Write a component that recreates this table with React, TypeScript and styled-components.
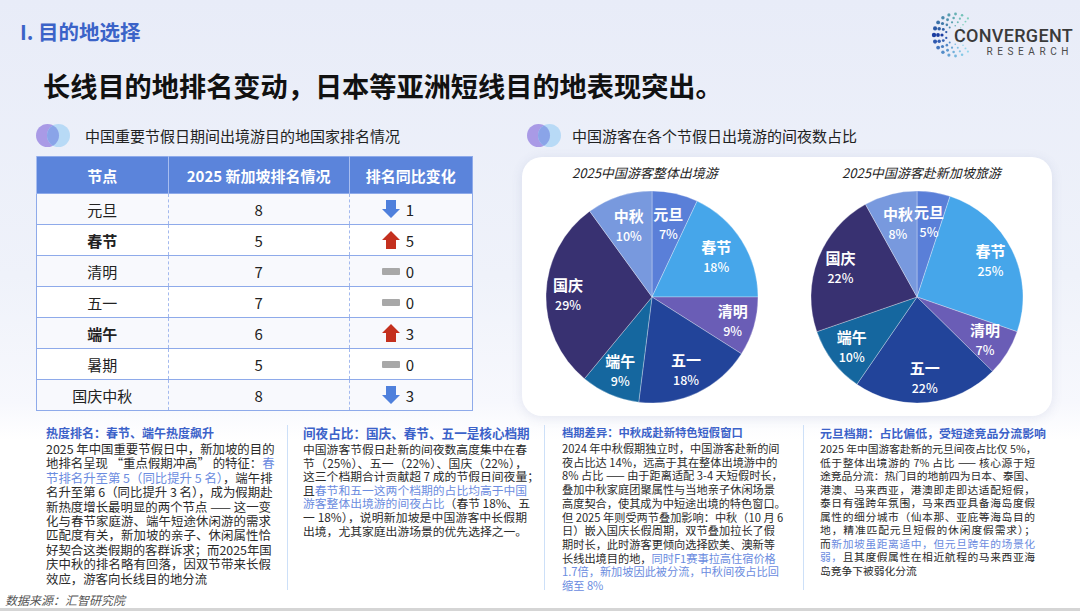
import React from 'react';
import styled, { createGlobalStyle } from 'styled-components';

const GlobalStyle = createGlobalStyle`
    html, body {
        margin: 0;
        padding: 0;
    }
    body {
        font-family: "Noto Sans CJK SC", "Noto Sans", sans-serif;
        background: #fff;
    }
`;

const Page = styled.div`
    width: 1080px;
    height: 611px;
    overflow: hidden;
    display: flex;
    flex-direction: column;
    background: linear-gradient(180deg, #e8ecf8 0%, #eff2fa 45%, #f7f8fd 66%, #fff 72%, #fff 100%);
`;

const TopBar = styled.div`
    display: flex;
    justify-content: space-between;
    align-items: flex-start;
    height: 58px;
    padding: 12px 7px 0 20px;
    box-sizing: border-box;
`;

const SectionLabel = styled.div`
    margin-top: 8px;
    font-size: 20.5px;
    line-height: 22px;
    font-weight: 700;
    color: #3b63c8;
`;

const Logo = styled.div`
    display: flex;
    align-items: flex-start;
`;

const LogoText = styled.div`
    display: flex;
    flex-direction: column;
    align-items: flex-end;
    margin: 14px 0 0 -23px;
    font-family: Roboto, "Liberation Sans", sans-serif;
    color: #3a3a3a;
`;

const LogoName = styled.span`
    font-size: 18px;
    line-height: 20px;
    font-weight: 500;
    letter-spacing: 0.3px;
`;

const LogoSub = styled.span`
    font-size: 10px;
    line-height: 11px;
    letter-spacing: 4.6px;
    color: #4a4a4a;
`;

const Title = styled.h1`
    margin: 10px 0 0 43px;
    font-size: 27.2px;
    line-height: 34px;
    font-weight: 700;
    color: #111;
`;

const Main = styled.div`
    display: grid;
    grid-template-columns: 437px 530px;
    column-gap: 49px;
    margin-top: 21px;
    padding-left: 36px;
`;

const Column = styled.div`
    display: flex;
    flex-direction: column;
`;

const SubHeader = styled.div<{ $indent: number; $gap: number; $below: number }>`
    display: flex;
    align-items: center;
    height: 24px;
    padding-left: ${p => p.$indent}px;
    gap: ${p => p.$gap}px;
    margin-bottom: ${p => p.$below}px;
    font-size: 15px;
    color: #222;
`;

const Table = styled.table`
    width: 437px;
    border-collapse: collapse;
    font-size: 15px;
    color: #222;
    border: 1px solid #8eaaea;

    tbody tr:nth-child(odd) {
        background: #f8f9fd;
    }
    tbody tr:nth-child(even) {
        background: #fff;
    }
`;

const HeadCell = styled.th<{ $w: number }>`
    width: ${p => p.$w}px;
    height: 36px;
    padding: 0;
    background: #5b84db;
    color: #fff;
    font-weight: 700;
    font-size: 15px;
    border-left: 1px solid #a7bdf0;
`;

const Cell = styled.td<{ $bold?: boolean }>`
    height: 30px;
    padding: 0;
    text-align: center;
    font-weight: ${p => (p.$bold ? 700 : 400)};
    border-top: 1px solid #8eaaea;
    border-left: 1px dashed #a3b9ee;
`;

const ChangeBox = styled.div`
    display: flex;
    align-items: center;
    gap: 6px;
    padding-left: 32px;
`;

const Card = styled.div`
    display: grid;
    grid-template-columns: 265px 265px;
    width: 530px;
    height: 259px;
    padding-top: 8px;
    box-sizing: border-box;
    background: #fff;
    border-radius: 20px;
    box-shadow: 0 2px 12px rgba(70, 90, 150, 0.12);
`;

const ChartCol = styled.div`
    display: flex;
    flex-direction: column;
`;

const ChartTitle = styled.div<{ $indent: number }>`
    padding-left: ${p => p.$indent}px;
    font-size: 13px;
    line-height: 16px;
    font-style: italic;
    color: #222;
`;

const Notes = styled.div`
    display: grid;
    grid-template-columns: 259px 257px 259px 1fr;
    margin: 9px 0 0 28px;
`;

const Note = styled.div<{ $divider: boolean; $pl: number }>`
    height: 165px;
    padding-left: ${p => p.$pl}px;
    border-left: ${p => (p.$divider ? '1px solid #cde0f8' : '1px solid transparent')};
`;

const NoteHead = styled.div<{ $fs: number }>`
    font-size: ${p => p.$fs}px;
    line-height: 15px;
    font-weight: 700;
    color: #3c62c9;
    white-space: nowrap;
`;

const NoteBody = styled.div<{ $fs: number; $lh: number; $w: number }>`
    margin-top: 2px;
    width: ${p => p.$w}px;
    font-family: "Liberation Sans Narrow", "Noto Sans CJK SC", sans-serif;
    font-size: ${p => p.$fs}px;
    line-height: ${p => p.$lh}px;
    color: #2b2b2b;
`;

const NoteLine = styled.span<{ $last?: boolean }>`
    display: block;
    white-space: nowrap;
    text-align: justify;
    text-align-last: ${p => (p.$last ? 'left' : 'justify')};
`;

const Hl = styled.span`
    color: #6b8ce0;
`;

const Source = styled.div`
    margin-top: auto;
    padding-left: 5px;
    font-size: 12px;
    line-height: 14px;
    font-style: italic;
    color: #555;
`;

const BottomBar = styled.div`
    height: 3px;
    margin-top: 1px;
    background: #d5d5d5;
`;

const mix = (a: number[], b: number[], t: number) =>
    `rgb(${a.map((v, i) => Math.round(v + (b[i] - v) * t)).join(',')})`;

const LogoMark = () => {
    const green = [60, 190, 150];
    const navy = [26, 60, 160];
    const cyan = [90, 200, 230];
    const rings = [
        { r: 21, n: 15, size: 2.2 },
        { r: 17, n: 13, size: 1.9 },
        { r: 13, n: 11, size: 1.6 },
        { r: 9.2, n: 8, size: 1.25 },
    ];
    const dots: React.ReactNode[] = [];
    rings.forEach((ring, ri) => {
        for (let i = 0; i < ring.n; i++) {
            const deg = 52 + (256 * i) / (ring.n - 1);
            const rad = (deg * Math.PI) / 180;
            const k = 1 - Math.abs(deg - 180) / 128;
            const color = deg < 180 ? mix(green, navy, (deg - 52) / 128) : mix(navy, cyan, (deg - 180) / 128);
            dots.push(
                <circle
                    key={`${ri}-${i}`}
                    cx={24 + ring.r * Math.cos(rad)}
                    cy={23 - ring.r * Math.sin(rad)}
                    r={ring.size * (0.5 + 0.5 * k)}
                    fill={color}
                    opacity={0.6 + 0.4 * k}
                />
            );
        }
    });
    return (
        <svg width="46" height="46" viewBox="0 0 46 46">
            {dots}
        </svg>
    );
};

const Bubbles = () => (
    <svg width="34" height="23" viewBox="0 0 34 23">
        <defs>
            <clipPath id="rightBubble">
                <circle cx="22.5" cy="11.5" r="11.5" />
            </clipPath>
        </defs>
        <circle cx="11.5" cy="11.5" r="11.5" fill="#a99ae6" />
        <circle cx="22.5" cy="11.5" r="11.5" fill="#b8daf6" />
        <circle cx="11.5" cy="11.5" r="11.5" fill="#8aa4e8" clipPath="url(#rightBubble)" />
    </svg>
);

type Dir = 'up' | 'down' | 'flat';

const Trend = ({ dir }: { dir: Dir }) => (
    <svg width="18" height="18" viewBox="0 0 18 18">
        {dir === 'down' && <path d="M4 0h10v9h4l-9 9-9-9h4z" fill="#4f80dc" />}
        {dir === 'up' && <path d="M9 0l9 9h-4v9H4V9H0z" fill="#c4301e" />}
        {dir === 'flat' && <rect x="0" y="6" width="18" height="7" rx="1" fill="#a8a8a8" />}
    </svg>
);

const rows: { name: string; rank: number; dir: Dir; change: number; bold?: boolean }[] = [
    { name: '元旦', rank: 8, dir: 'down', change: 1 },
    { name: '春节', rank: 5, dir: 'up', change: 5, bold: true },
    { name: '清明', rank: 7, dir: 'flat', change: 0 },
    { name: '五一', rank: 7, dir: 'flat', change: 0 },
    { name: '端午', rank: 6, dir: 'up', change: 3, bold: true },
    { name: '暑期', rank: 5, dir: 'flat', change: 0 },
    { name: '国庆中秋', rank: 8, dir: 'down', change: 3 },
];

const COLORS: Record<string, string> = {
    元旦: '#5a7fd8',
    春节: '#46a6ea',
    清明: '#6a5db6',
    五一: '#22449a',
    端午: '#15679f',
    国庆: '#383171',
    中秋: '#7899de',
};

type Slice = { name: string; value: number; lr: number };

const pies: { title: string; indent: number; slices: Slice[] }[] = [
    {
        title: '2025中国游客整体出境游',
        indent: 50,
        slices: [
            { name: '元旦', value: 7, lr: 75 },
            { name: '春节', value: 18, lr: 76 },
            { name: '清明', value: 9, lr: 84 },
            { name: '五一', value: 18, lr: 80 },
            { name: '端午', value: 9, lr: 80 },
            { name: '国庆', value: 29, lr: 84 },
            { name: '中秋', value: 10, lr: 75 },
        ],
    },
    {
        title: '2025中国游客赴新加坡旅游',
        indent: 55,
        slices: [
            { name: '元旦', value: 5, lr: 76 },
            { name: '春节', value: 25, lr: 82 },
            { name: '清明', value: 7, lr: 80 },
            { name: '五一', value: 22, lr: 81 },
            { name: '端午', value: 10, lr: 82 },
            { name: '国庆', value: 22, lr: 82 },
            { name: '中秋', value: 8, lr: 76 },
        ],
    },
];

const Pie = ({ slices }: { slices: Slice[] }) => {
    const cx = 130;
    const cy = 116;
    const r = 106;
    const total = slices.reduce((s, x) => s + x.value, 0);
    const pt = (f: number, rr: number) => [cx + rr * Math.sin(2 * Math.PI * f), cy - rr * Math.cos(2 * Math.PI * f)];
    let acc = 0;
    return (
        <svg width="265" height="230" viewBox="0 0 265 230">
            {slices.map(s => {
                const a0 = acc / total;
                acc += s.value;
                const a1 = acc / total;
                const [x0, y0] = pt(a0, r);
                const [x1, y1] = pt(a1, r);
                const large = a1 - a0 > 0.5 ? 1 : 0;
                return (
                    <path
                        key={s.name}
                        d={`M${cx} ${cy}L${x0} ${y0}A${r} ${r} 0 ${large} 1 ${x1} ${y1}Z`}
                        fill={COLORS[s.name]}
                        stroke="#ffffff"
                        strokeOpacity={0.5}
                        strokeWidth={0.6}
                    />
                );
            })}
            {(() => {
                let a = 0;
                return slices.map(s => {
                    const mid = (a + s.value / 2) / total;
                    a += s.value;
                    const [lx, ly] = pt(mid, s.lr);
                    return (
                        <g key={s.name} fill="#fff" textAnchor="middle" fontFamily='"Noto Sans CJK SC", sans-serif'>
                            <text x={lx} y={ly - 10} dominantBaseline="central" fontSize="15" fontWeight="700">
                                {s.name}
                            </text>
                            <text x={lx} y={ly + 10} dominantBaseline="central" fontSize="12.5" fontWeight="500">
                                {s.value}%
                            </text>
                        </g>
                    );
                });
            })()}
        </svg>
    );
};

type NoteData = {
    pl: number;
    head: string;
    hfs: number;
    fs: number;
    lh: number;
    w: number;
    lines: React.ReactNode[];
};

const notes: NoteData[] = [
    {
        pl: 17,
        head: '热度排名：春节、端午热度飙升',
        hfs: 12,
        fs: 12.4,
        lh: 14.4,
        w: 225,
        lines: [
            '2025 年中国重要节假日中，新加坡的目的',
            <>地排名呈现 “重点假期冲高” 的特征：<Hl>春</Hl></>,
            <><Hl>节排名升至第 5（同比提升 5 名）</Hl>，端午排</>,
            '名升至第 6（同比提升 3 名），成为假期赴',
            '新热度增长最明显的两个节点 —— 这一变',
            '化与春节家庭游、端午短途休闲游的需求',
            '匹配度有关，新加坡的亲子、休闲属性恰',
            '好契合这类假期的客群诉求；而2025年国',
            '庆中秋的排名略有回落，因双节带来长假',
            '效应，游客向长线目的地分流',
        ],
    },
    {
        pl: 15,
        head: '间夜占比：国庆、春节、五一是核心档期',
        hfs: 12.6,
        fs: 11.8,
        lh: 13.6,
        w: 224,
        lines: [
            '中国游客节假日赴新的间夜数高度集中在春',
            '节（25%）、五一（22%）、国庆（22%），',
            '这三个档期合计贡献超 7 成的节假日间夜量；',
            <>且<Hl>春节和五一这两个档期的占比均高于中国</Hl></>,
            <><Hl>游客整体出境游的间夜占比</Hl>（春节 18%、五</>,
            '一 18%），说明新加坡是中国游客中长假期',
            '出境，尤其家庭出游场景的优先选择之一。',
        ],
    },
    {
        pl: 17,
        head: '档期差异：中秋成赴新特色短假窗口',
        hfs: 11.3,
        fs: 11.2,
        lh: 13.7,
        w: 213,
        lines: [
            '2024 年中秋假期独立时，中国游客赴新的间',
            '夜占比达 14%，远高于其在整体出境游中的',
            '8% 占比 —— 由于距离适配 3-4 天短假时长，',
            '叠加中秋家庭团聚属性与当地亲子休闲场景',
            '高度契合，使其成为中短途出境的特色窗口。',
            '但 2025 年则受两节叠加影响：中秋（10 月 6',
            '日）嵌入国庆长假周期，双节叠加拉长了假',
            '期时长，此时游客更倾向选择欧美、澳新等',
            <>长线出境目的地，<Hl>同时F1赛事拉高住宿价格</Hl></>,
            <Hl>1.7倍，新加坡因此被分流，中秋间夜占比回</Hl>,
            <Hl>缩至 8%</Hl>,
        ],
    },
    {
        pl: 16,
        head: '元旦档期：占比偏低，受短途竞品分流影响',
        hfs: 11.9,
        fs: 10.75,
        lh: 13.5,
        w: 215,
        lines: [
            '2025 年中国游客赴新的元旦间夜占比仅 5%，',
            '低于整体出境游的 7% 占比 —— 核心源于短',
            '途竞品分流：热门目的地前四为日本、泰国、',
            '港澳、马来西亚，港澳即走即达适配短假，',
            '泰日有强跨年氛围，马来西亚具备海岛度假',
            '属性的细分城市（仙本那、亚庇等海岛目的',
            '地，精准匹配元旦短假的休闲度假需求）；',
            <>而<Hl>新加坡虽距离适中，但元旦跨年的场景化</Hl></>,
            <><Hl>弱，</Hl>且其度假属性在相近航程的马来西亚海</>,
            '岛竞争下被弱化分流',
        ],
    },
];

const App = () => (
    <Page>
        <GlobalStyle />
        <TopBar>
            <SectionLabel>I. 目的地选择</SectionLabel>
            <Logo>
                <LogoMark />
                <LogoText>
                    <LogoName>CONVERGENT</LogoName>
                    <LogoSub>RESEARCH</LogoSub>
                </LogoText>
            </Logo>
        </TopBar>
        <Title>长线目的地排名变动，日本等亚洲短线目的地表现突出。</Title>
        <Main>
            <Column>
                <SubHeader $indent={0} $gap={15} $below={9}>
                    <Bubbles />
                    中国重要节假日期间出境游目的地国家排名情况
                </SubHeader>
                <Table>
                    <thead>
                        <tr>
                            <HeadCell $w={132}>节点</HeadCell>
                            <HeadCell $w={182}>2025 新加坡排名情况</HeadCell>
                            <HeadCell $w={123}>排名同比变化</HeadCell>
                        </tr>
                    </thead>
                    <tbody>
                        {rows.map(row => (
                            <tr key={row.name}>
                                <Cell $bold={row.bold}>{row.name}</Cell>
                                <Cell>{row.rank}</Cell>
                                <Cell>
                                    <ChangeBox>
                                        <Trend dir={row.dir} />
                                        {row.change}
                                    </ChangeBox>
                                </Cell>
                            </tr>
                        ))}
                    </tbody>
                </Table>
            </Column>
            <Column>
                <SubHeader $indent={5} $gap={11} $below={10}>
                    <Bubbles />
                    中国游客在各个节假日出境游的间夜数占比
                </SubHeader>
                <Card>
                    {pies.map(pie => (
                        <ChartCol key={pie.title}>
                            <ChartTitle $indent={pie.indent}>{pie.title}</ChartTitle>
                            <Pie slices={pie.slices} />
                        </ChartCol>
                    ))}
                </Card>
            </Column>
        </Main>
        <Notes>
            {notes.map((n, i) => (
                <Note key={n.head} $divider={i > 0} $pl={n.pl}>
                    <NoteHead $fs={n.hfs}>{n.head}</NoteHead>
                    <NoteBody $fs={n.fs} $lh={n.lh} $w={n.w}>
                        {n.lines.map((line, li) => (
                            <NoteLine key={li} $last={li === n.lines.length - 1}>
                                {line}
                            </NoteLine>
                        ))}
                    </NoteBody>
                </Note>
            ))}
        </Notes>
        <Source>数据来源：汇智研究院</Source>
        <BottomBar />
    </Page>
);

export default App;
